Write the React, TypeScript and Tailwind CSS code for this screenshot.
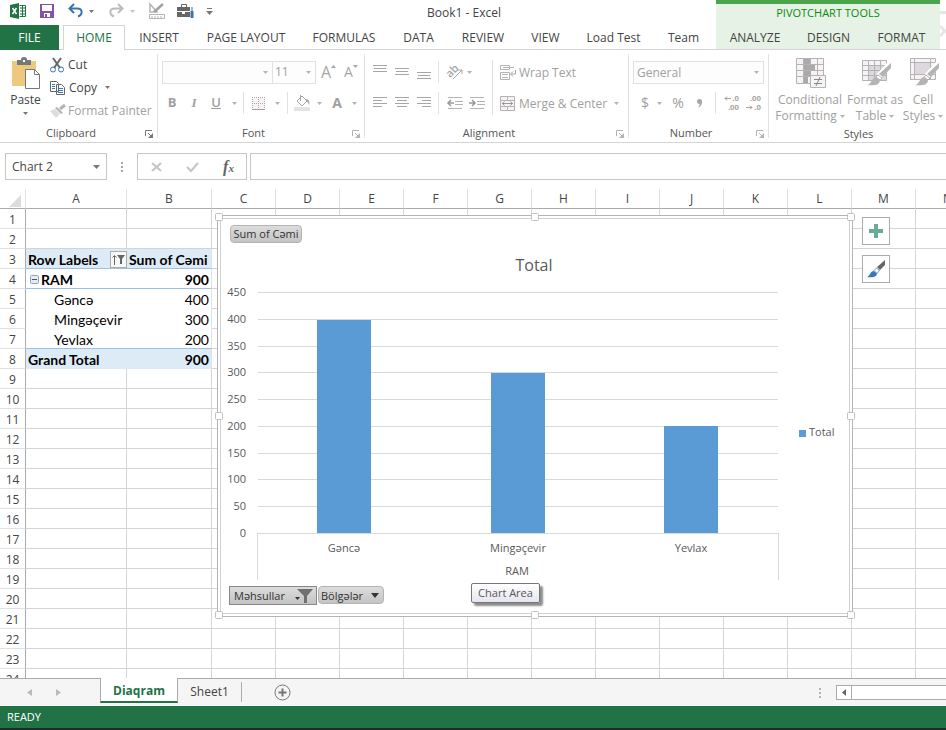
import { ReactNode } from 'react';

const TABS = [
  { label: 'INSERT', width: 'w-[67px]' },
  { label: 'PAGE LAYOUT', width: 'w-[107px]' },
  { label: 'FORMULAS', width: 'w-[89px]' },
  { label: 'DATA', width: 'w-[60px]' },
  { label: 'REVIEW', width: 'w-[69px]' },
  { label: 'VIEW', width: 'w-[56px]' },
  { label: 'Load Test', width: 'w-[80px]' },
  { label: 'Team', width: 'w-[60px]' },
];

const TOOL_TABS = [
  { label: 'ANALYZE', width: 'w-[78px]' },
  { label: 'DESIGN', width: 'w-[69px]' },
  { label: 'FORMAT', width: 'w-[77px]' },
];

const COLUMNS = ['A', 'B', 'C', 'D', 'E', 'F', 'G', 'H', 'I', 'J', 'K', 'L', 'M', 'N'];
const ROWS = Array.from({ length: 24 }, (_, i) => i + 1);

interface IconProps {
  w: number;
  h: number;
  children: ReactNode;
}

function Icon({ w, h, children }: IconProps) {
  return (
    <svg width={w} height={h} viewBox={`0 0 ${w} ${h}`} fill="none" className="shrink-0 overflow-visible" aria-hidden="true">
      {children}
    </svg>
  );
}

function Caret({ color = '#b4b4b4' }: { color?: string }) {
  return (
    <Icon w={5} h={3}>
      <path d="M0 0h5L2.500 3z" fill={color} />
    </Icon>
  );
}

function Launcher({ color = '#b4b4b4' }: { color?: string }) {
  return (
    <Icon w={8} h={8}>
      <path d="M.5 6V.5H7M3 3l3 3" stroke={color} />
      <path d="M8 3v5H3z" fill={color} />
    </Icon>
  );
}

function Divider() {
  return <span className="h-[22px] w-px shrink-0 bg-[#e1e1e1]" />;
}

interface IconButtonProps {
  label: string;
  width: string;
  children: ReactNode;
}

function IconButton({ label, width, children }: IconButtonProps) {
  return (
    <button aria-label={label} className={`flex h-[22px] shrink-0 items-center justify-center ${width}`}>
      {children}
    </button>
  );
}

interface GroupProps {
  name: string;
  width: string;
  launcher?: ReactNode;
  children: ReactNode;
}

function Group({ name, width, launcher, children }: GroupProps) {
  return (
    <section className={`my-1 flex shrink-0 flex-col border-r border-[#e1e1e1] ${width}`}>
      <div className="h-[75px] shrink-0">{children}</div>
      <div className="flex h-[9px] items-center pr-1">
        <h2 className="flex-1 pr-1 pl-px text-center text-[11px] text-[#555]">{name}</h2>
        {launcher}
      </div>
    </section>
  );
}

function Lines({ rows }: { rows: [number, number, number][] }) {
  return (
    <Icon w={14} h={14}>
      {rows.map(([x, y, len]) => (
        <path key={y} d={`M${x} ${y}.5h${len}`} stroke="#a6a6a6" />
      ))}
    </Icon>
  );
}

function QuickAccess() {
  return (
    <div className="flex h-[22px] w-[212px] items-center pl-[10px]">
      <Icon w={16} h={16}>
        <path d="M0 2l9-2v16l-9-2z" fill="#217346" />
        <path d="M9.5 2.5h6v11h-6M10 5h5M10 8h5M10 11h5M12.5 3v10" stroke="#217346" />
        <path d="M2.500 5l4 6M6.500 5l-4 6" stroke="#fff" strokeWidth="1.500" />
      </Icon>
      <button aria-label="Save" className="ml-[14px]">
        <Icon w={14} h={14}>
          <path d="M0 0h14v14H0z" fill="#8452a8" />
          <path d="M2 1h10v6H2zM4 9h6v4H4z" fill="#fff" />
          <path d="M5 10h2v3H5z" fill="#8452a8" />
        </Icon>
      </button>
      <button aria-label="Undo" className="ml-[14px] flex items-center gap-[6px]">
        <Icon w={15} h={14}>
          <path d="M6 0L1.500 4.500L6 9M2 4.500h7c6 0 6 6 1 8" stroke="#3b73af" strokeWidth="2" />
        </Icon>
        <Caret color="#777" />
      </button>
      <button aria-label="Redo" className="ml-[15px] flex items-center gap-[6px]">
        <Icon w={15} h={14}>
          <path d="M9 0l4.500 4.500L9 9M13 4.500H6c-6 0-6 6-1 8" stroke="#bcbcbc" strokeWidth="2" />
        </Icon>
        <Caret color="#c4c4c4" />
      </button>
      <button aria-label="Design mode" className="ml-[14px]">
        <Icon w={16} h={16}>
          <path d="M1 1v8h7z" stroke="#b4b4b4" strokeWidth="1.500" />
          <path d="M14 1L5 9" stroke="#a0a0a0" strokeWidth="2.500" />
          <path d="M.5 11.500h15v4H.5zM3 13v2M6 13v2M9 13v2M12 13v2" stroke="#b4b4b4" />
        </Icon>
      </button>
      <button aria-label="Toolbox" className="ml-3">
        <Icon w={17} h={14}>
          <path d="M4.500 3V.5h5V3" stroke="#666" />
          <path d="M0 3h13v4H0zM0 8h5v2h3V8h5v5H0z" fill="#666" />
          <path d="M15 3v4" stroke="#3b73af" />
          <path d="M13.500 7h3v7h-3z" fill="#3b73af" />
        </Icon>
      </button>
      <button aria-label="Customize" className="ml-3">
        <Icon w={7} h={7}>
          <path d="M1 .5h5" stroke="#777" />
          <path d="M0 3h7L3.500 7z" fill="#777" />
        </Icon>
      </button>
    </div>
  );
}

function Header() {
  return (
    <header className="flex h-[50px] shrink-0">
      <div className="flex w-[716px] shrink-0 flex-col">
        <div className="flex h-[25px]">
          <QuickAccess />
          <h1 className="flex-1 text-center text-xs leading-[26px] text-[#444]">Book1 - Excel</h1>
        </div>
        <nav className="flex h-[25px] text-xs text-[#444]">
          <button className="w-[59px] bg-[#217346] text-white">FILE</button>
          <span className="w-1 border-b border-[#d4d4d4]" />
          <button className="w-[62px] border border-b-0 border-[#d4d4d4] text-[#217346]">HOME</button>
          {TABS.map((tab) => (
            <button key={tab.label} className={`shrink-0 whitespace-nowrap border-b border-[#d4d4d4] pl-px pt-[2px] ${tab.width}`}>
              {tab.label}
            </button>
          ))}
          <span className="flex-1 border-b border-[#d4d4d4]" />
        </nav>
      </div>
      <div className="flex w-[224px] shrink-0 flex-col border-t-4 border-[#4ba54b] bg-[#e6f2e6]">
        <p className="h-[21px] text-center text-[11px] leading-[18px] text-[#0a8a0a]">PIVOTCHART TOOLS</p>
        <nav className="flex h-[25px] text-xs text-[#444]">
          {TOOL_TABS.map((tab) => (
            <button key={tab.label} className={`border-b border-[#d4d4d4] pt-[2px] ${tab.width}`}>
              {tab.label}
            </button>
          ))}
        </nav>
      </div>
      <div className="flex-1 overflow-hidden border-b border-[#d4d4d4]">
        <Icon w={6} h={40}>
          <path d="M0 12.500h6M0 26l5 5-5 5" stroke="#e6e6e6" strokeWidth="3" />
        </Icon>
      </div>
    </header>
  );
}

function ClipboardGroup() {
  return (
    <Group name="Clipboard" width="w-[158px]" launcher={<Launcher color="#777" />}>
      <div className="flex">
        <button className="flex w-[50px] flex-col items-center pl-px pt-1 text-xs text-[#444]">
          <Icon w={29} h={31}>
            <path d="M1 3h24v25H1z" fill="#edc87e" />
            <path d="M6 2h4a3 3 0 016 0h4v5H6z" fill="#777" />
            <path d="M12 2h2v2h-2z" fill="#fff" />
            <path d="M14.500 11.500h9l5 5v14h-14z" fill="#fff" stroke="#777" />
            <path d="M23.500 11.500v5h5" stroke="#777" />
          </Icon>
          <span className="pt-px leading-[20px]">Paste</span>
          <span className="mt-[2px]">
            <Caret color="#777" />
          </span>
        </button>
        <div className="flex flex-col text-xs text-[#444]">
          <button className="flex h-[22px] items-center gap-1">
            <Icon w={14} h={15}>
              <path d="M3 0l7 10M11 0L4 10" stroke="#666" strokeWidth="2" />
              <circle cx="3" cy="11.500" r="2.500" stroke="#3b73af" />
              <circle cx="11" cy="11.500" r="2.500" stroke="#3b73af" />
            </Icon>
            Cut
          </button>
          <button className="flex h-[23px] items-center gap-1">
            <Icon w={15} h={14}>
              <path d="M.5.5h6l2 2v8h-8zM6.500 3.500h5l3 3v7h-8z" fill="#fff" stroke="#666" />
              <path d="M2 3.500h3M2 5.500h3M2 7.500h3M8 7.500h5M8 9.500h5M8 11.500h5" stroke="#3b73af" />
            </Icon>
            Copy
            <span className="ml-1">
              <Caret color="#777" />
            </span>
          </button>
          <button className="flex h-[23px] items-center gap-[2px] whitespace-nowrap text-[#a0a0a0]">
            <Icon w={16} h={14}>
              <path d="M0 7l5-2 5 5-4 4z" fill="#ddd" />
              <path d="M5 4l2-1 6 6-2 1z" fill="#b4b4b4" />
              <path d="M10 5l5-4" stroke="#b4b4b4" strokeWidth="3" />
            </Icon>
            Format Painter
          </button>
        </div>
      </div>
    </Group>
  );
}

function FontGroup() {
  return (
    <Group name="Font" width="w-[207px]" launcher={<Launcher />}>
      <div className="flex h-[36px] items-center pl-1">
        <label className="flex h-[23px] w-[111px] items-center border border-[#e1e1e1] bg-[#fdfdfd] pr-1">
          <input aria-label="Font name" className="min-w-0 flex-1 outline-none" />
          <Caret />
        </label>
        <label className="flex h-[23px] w-[43px] items-center border border-l-0 border-[#e1e1e1] bg-[#fdfdfd] pr-1">
          <input aria-label="Font size" defaultValue="11" className="w-0 flex-1 pl-[2px] text-xs text-[#a0a0a0] outline-none" />
          <Caret />
        </label>
        <IconButton label="Increase font size" width="w-[25px]">
          <span className="text-base leading-none text-[#a6a6a6]">A</span>
          <span className="mb-3">
            <Icon w={5} h={3}>
              <path d="M0 3h5L2.500 0z" fill="#a6a6a6" />
            </Icon>
          </span>
        </IconButton>
        <IconButton label="Decrease font size" width="w-[20px]">
          <span className="text-sm leading-none text-[#a6a6a6]">A</span>
          <span className="mb-3">
            <Caret color="#a6a6a6" />
          </span>
        </IconButton>
      </div>
      <div className="flex h-[26px] items-center pl-[3px] text-[13px] text-[#a0a0a0]">
        <IconButton label="Bold" width="w-[22px]">
          <b>B</b>
        </IconButton>
        <IconButton label="Italic" width="w-[22px]">
          <i className="font-['Liberation_Serif',serif] font-bold">I</i>
        </IconButton>
        <IconButton label="Underline" width="w-[22px]">
          <span className="font-semibold underline">U</span>
        </IconButton>
        <IconButton label="Underline style" width="w-[15px]">
          <Caret />
        </IconButton>
        <span className="w-px" />
        <Divider />
        <IconButton label="Borders" width="w-[29px]">
          <Icon w={13} h={13}>
            <path d="M.5 .5h12v12H.5z" fill="#f6f2f6" />
            <path d="M.5 0v12M6.500 0v12M12.500 0v12M0 .5h13M0 6.500h13" stroke="#a6a6a6" strokeDasharray="1 1" />
            <path d="M0 12.500h13" stroke="#a0a0a0" />
          </Icon>
        </IconButton>
        <IconButton label="Border style" width="w-[8px]">
          <Caret />
        </IconButton>
        <span className="w-[6px]" />
        <Divider />
        <IconButton label="Fill color" width="w-[29px]">
          <Icon w={17} h={16}>
            <path d="M3 6l5-5 5 5-5 5zM6.500 0v6" stroke="#a6a6a6" />
            <path d="M12 4c3 0 4 3 3 6-1-3-2-4-3-4z" fill="#a6a6a6" />
            <path d="M0 12h16v4H0z" fill="#e5e1e5" />
          </Icon>
        </IconButton>
        <Caret />
        <IconButton label="Font color" width="w-[30px]">
          <b className="text-sm">A</b>
        </IconButton>
        <Caret />
      </div>
    </Group>
  );
}

function Indent({ flip = false }: { flip?: boolean }) {
  return (
    <Icon w={16} h={12}>
      <path d="M1 .5h14M8 4.500h8M8 7.500h8M1 11.500h14" stroke="#b4b4b4" />
      <path d={flip ? 'M0 6h5M3 3l3 3-3 3' : 'M7 6H1M4 3L1 6l3 3'} stroke="#999" strokeWidth="1.500" />
    </Icon>
  );
}

function AlignmentGroup() {
  return (
    <Group name="Alignment" width="w-[264px]" launcher={<Launcher />}>
      <div className="flex pl-1 text-xs text-[#a0a0a0]">
        <div className="flex w-[70px] flex-col">
          <div className="flex h-[36px] items-center">
            <IconButton label="Top align" width="w-[22px]">
              <Lines rows={[[0, 0, 14], [1, 3, 12], [0, 6, 14]]} />
            </IconButton>
            <IconButton label="Middle align" width="w-[22px]">
              <Lines rows={[[0, 3, 14], [1, 6, 12], [0, 9, 14]]} />
            </IconButton>
            <IconButton label="Bottom align" width="w-[22px]">
              <Lines rows={[[0, 7, 14], [1, 10, 12], [0, 13, 14]]} />
            </IconButton>
            <span className="flex-1" />
            <Divider />
          </div>
          <div className="flex h-[26px] items-center">
            <IconButton label="Align left" width="w-[22px]">
              <Lines rows={[[0, 1, 14], [0, 4, 9], [0, 7, 14], [0, 10, 9]]} />
            </IconButton>
            <IconButton label="Center" width="w-[22px]">
              <Lines rows={[[0, 1, 14], [2, 4, 10], [0, 7, 14], [2, 10, 10]]} />
            </IconButton>
            <IconButton label="Align right" width="w-[22px]">
              <Lines rows={[[0, 1, 14], [5, 4, 9], [0, 7, 14], [5, 10, 9]]} />
            </IconButton>
            <span className="flex-1" />
            <Divider />
          </div>
        </div>
        <div className="flex w-[53px] flex-col">
          <button aria-label="Orientation" className="flex h-[36px] items-center gap-1 pl-2">
            <Icon w={16} h={16}>
              <text x="-1" y="11" fontSize="11" fontWeight="600" fill="#a6a6a6" transform="rotate(-45 5 8)">
                ab
              </text>
              <path d="M6 15L15 6M11 6h4v4" stroke="#a6a6a6" />
            </Icon>
            <Caret />
          </button>
          <div className="flex h-[26px] items-center pl-[5px]">
            <IconButton label="Decrease indent" width="w-[22px]">
              <Indent />
            </IconButton>
            <IconButton label="Increase indent" width="w-[22px]">
              <Indent flip />
            </IconButton>
          </div>
        </div>
        <span className="mt-[6px] h-[55px] w-px bg-[#e1e1e1]" />
        <div className="flex flex-col pl-[7px]">
          <button className="flex h-[36px] items-center gap-[3px] pt-px">
            <Icon w={16} h={15}>
              <path d="M.5.5h9v4h-9zM.5 7.500h9v7h-9zM3 2.500h11M2 9.500h6M2 12.500h6" stroke="#b4b4b4" />
              <path d="M15.500 5v4H11M13 6.500L10.500 9l2.500 2.500" stroke="#a6a6a6" />
            </Icon>
            Wrap Text
          </button>
          <button className="flex h-[26px] items-center gap-[3px] whitespace-nowrap pt-px">
            <Icon w={16} h={15}>
              <path d="M.5.5h14v14H.5zM.5 4.500h14M.5 10.500h14M7.500 0v4M7.500 11v4" fill="#f6f2f6" stroke="#b4b4b4" />
              <path d="M2 7.500h11M4.500 5.500l-2 2 2 2M10.500 5.500l2 2-2 2" stroke="#999" />
            </Icon>
            Merge &amp; Center
            <span className="ml-1">
              <Caret />
            </span>
          </button>
        </div>
      </div>
    </Group>
  );
}

function NumberGroup() {
  return (
    <Group name="Number" width="w-[140px]" launcher={<Launcher />}>
      <div className="flex h-[36px] items-center px-1">
        <button
          aria-label="Number format"
          className="flex h-[23px] w-full items-center justify-between border border-[#e1e1e1] bg-[#fdfdfd] pl-[3px] pr-1 pt-px text-xs text-[#a0a0a0]"
        >
          General
          <Caret />
        </button>
      </div>
      <div className="flex h-[26px] items-center pl-1 text-sm text-[#a0a0a0]">
        <IconButton label="Accounting format" width="w-[24px]">
          $
        </IconButton>
        <Caret />
        <IconButton label="Percent style" width="w-[32px]">
          %
        </IconButton>
        <IconButton label="Comma style" width="w-[10px]">
          <Icon w={5} h={9}>
            <circle cx="2.500" cy="2.500" r="2.500" fill="#a6a6a6" />
            <path d="M5 2c0 4-1 5-4 7 2-3 2-4 1-6z" fill="#a6a6a6" />
          </Icon>
        </IconButton>
        <span className="w-[11px]" />
        <Divider />
        <button
          aria-label="Increase decimal"
          className="ml-[7px] flex w-[16px] flex-col items-end font-['Liberation_Sans',sans-serif] text-[8px] leading-[9px] font-bold"
        >
          <span className="flex items-center gap-px">
            <Icon w={7} h={5}>
              <path d="M7 2.500H1M3 .5l-2 2 2 2" stroke="#a0a0a0" />
            </Icon>
            .0
          </span>
          <span>.00</span>
        </button>
        <button
          aria-label="Decrease decimal"
          className="ml-[6px] flex w-[16px] flex-col items-end font-['Liberation_Sans',sans-serif] text-[8px] leading-[9px] font-bold"
        >
          <span>.00</span>
          <span className="flex items-center gap-px">
            <Icon w={7} h={5}>
              <path d="M0 2.500h6M4 .5l2 2-2 2" stroke="#a0a0a0" />
            </Icon>
            .0
          </span>
        </button>
      </div>
    </Group>
  );
}

function Brush() {
  return (
    <>
      <path d="M31 6L19 19" stroke="#fff" strokeWidth="6" />
      <path d="M31 6v5l-8 9-4-3z" fill="#b4b4b4" />
      <path d="M7 28c5-1 4-7 9-8l4 3c0 5-6 6-13 5z" fill="#b4b4b4" />
      <path d="M16 20l2-2 4 3-2 2z" fill="#fff" stroke="#b4b4b4" />
    </>
  );
}

function StylesGroup() {
  return (
    <section className="my-1 flex w-[178px] shrink-0 flex-col pl-px text-xs leading-[16px] text-[#a0a0a0]">
      <div className="flex h-[75px] shrink-0">
        <button className="flex w-[80px] flex-col items-center pt-[3px]">
          <Icon w={31} h={32}>
            <path d="M1.500 1.500h27v25h-27zM1 7.500h27M1 13.500h27M1 19.500h27M8.500 1v25M15.500 1v25M22.500 1v25" fill="#f6f2f6" stroke="#b4b4b4" />
            <path d="M9 2h6v5H9zM9 8h11v5H9zM9 14h7v5H9zM9 20h4v6H9z" fill="#aaa" />
            <path d="M15.500 18.500h15v12h-15z" fill="#f6f2f6" stroke="#b4b4b4" />
            <path d="M19 22.500h8M19 26.500h8M25 20l-4 9" stroke="#888" />
          </Icon>
          <span className="mt-[3px] whitespace-nowrap">Conditional</span>
          <span className="flex items-center gap-[3px]">
            Formatting
            <Caret />
          </span>
        </button>
        <button className="flex w-[50px] flex-col items-center pt-[3px]">
          <Icon w={31} h={32}>
            <path d="M2.500 3.500h24v20h-24z" fill="#f6f2f6" />
            <path d="M9 9h17v14H9z" fill="#ddd8dd" />
            <path d="M2.500 3.500h24v20h-24zM2 8.500h24M2 13.500h24M2 18.500h24M8.500 3v20M14.500 3v20M20.500 3v20" stroke="#b4b4b4" />
            <Brush />
          </Icon>
          <span className="mt-[3px] whitespace-nowrap">Format as</span>
          <span className="flex items-center gap-[3px]">
            Table
            <Caret />
          </span>
        </button>
        <button className="flex w-[46px] flex-col items-center pt-[3px]">
          <Icon w={31} h={32}>
            <path d="M2.500 1.500h25v21h-25z" fill="#f6f2f6" />
            <path d="M7 6h15v11H7z" fill="#ddd8dd" />
            <path d="M2.500 1.500h25v21h-25zM2 5.500h25M2 17.500h25M6.500 1v21M22.500 1v21" stroke="#b4b4b4" />
            <Brush />
          </Icon>
          <span className="mt-[3px]">Cell</span>
          <span className="flex items-center gap-[3px]">
            Styles
            <Caret />
          </span>
        </button>
      </div>
      <h2 className="text-center text-[11px] leading-[9px] text-[#555]">Styles</h2>
    </section>
  );
}

function FormulaBar() {
  return (
    <div className="flex h-[46px] shrink-0 items-start pl-[5px] pt-[10px]">
      <label className="flex h-[27px] w-[102px] items-center border border-[#c6c6c6] pl-[6px] pr-[6px]">
        <input aria-label="Name box" defaultValue="Chart 2" className="w-0 flex-1 text-xs text-[#444] outline-none" />
        <Icon w={7} h={4}>
          <path d="M0 0h7L3.500 4z" fill="#777" />
        </Icon>
      </label>
      <span className="flex h-[27px] w-[30px] items-center justify-center">
        <Icon w={2} h={10}>
          <path d="M0 0h2v2H0zM0 4h2v2H0zM0 8h2v2H0z" fill="#a6a6a6" />
        </Icon>
      </span>
      <div className="flex h-[27px] w-[110px] items-center border border-[#c6c6c6]">
        <IconButton label="Cancel" width="w-[36px]">
          <Icon w={11} h={10}>
            <path d="M1 1l9 8M10 1L1 9" stroke="#c4c4c4" strokeWidth="2" />
          </Icon>
        </IconButton>
        <IconButton label="Enter" width="w-[37px]">
          <Icon w={13} h={10}>
            <path d="M1 5l4 4 7-8" stroke="#c4c4c4" strokeWidth="2" />
          </Icon>
        </IconButton>
        <IconButton label="Insert function" width="w-[35px]">
          <i className="font-['Liberation_Serif',serif] text-base leading-none font-bold text-[#666]">
            f<span className="text-[11px]">x</span>
          </i>
        </IconButton>
      </div>
      <input aria-label="Formula" className="ml-[3px] h-[27px] min-w-0 flex-1 border border-r-0 border-[#c6c6c6] px-2 text-xs outline-none" />
    </div>
  );
}

const PIVOT: Record<number, { label: string; value: string; style: string }> = {
  3: { label: 'Row Labels', value: 'Sum of Cəmi', style: 'bg-[#ddebf7] border-b-[#9bc2e6] font-bold' },
  4: { label: 'RAM', value: '900', style: 'border-b-[#9bc2e6] font-bold' },
  5: { label: 'Gəncə', value: '400', style: 'border-b-white' },
  6: { label: 'Mingəçevir', value: '300', style: 'border-b-white' },
  7: { label: 'Yevlax', value: '200', style: 'border-b-[#9bc2e6]' },
  8: { label: 'Grand Total', value: '900', style: 'bg-[#ddebf7] border-b-[#ddebf7] font-bold' },
};

function LabelCell({ row }: { row: number }) {
  const entry = PIVOT[row];
  if (row === 3) {
    return (
      <span className="flex items-center justify-between pl-[2px]">
        {entry.label}
        <button aria-label="Filter row labels" className="flex h-[17px] w-[17px] items-center justify-center border border-[#ababab] bg-[#f8f8f8]">
          <Icon w={13} h={11}>
            <path d="M2.500 11V2M.5 3.500l2-2 2 2" stroke="#666" />
            <path d="M5 1h8L10 5v5H8V5z" fill="#666" />
          </Icon>
        </button>
      </span>
    );
  }
  if (row === 4) {
    return (
      <span className="flex items-center gap-[2px] pl-1">
        <button aria-label="Collapse RAM">
          <Icon w={9} h={9}>
            <rect x=".5" y=".5" width="8" height="8" rx="1" fill="#e4ebf5" stroke="#8fa3c0" />
            <path d="M2 4.500h5" stroke="#44546a" />
          </Icon>
        </button>
        {entry.label}
      </span>
    );
  }
  return <span className={row === 8 ? 'pl-[2px]' : 'pl-7'}>{entry.label}</span>;
}

function Grid() {
  return (
    <table className="w-[980px] table-fixed border-separate border-spacing-0 text-[#444]">
      <colgroup>
        <col className="w-[26px]" />
        <col className="w-[101px]" />
        <col className="w-[85px]" />
        {COLUMNS.slice(2).map((c) => (
          <col key={c} className="w-[64px]" />
        ))}
      </colgroup>
      <thead>
        <tr className="h-[20px] text-xs leading-[19px]">
          <th className="border-b border-r border-b-[#ababab] border-r-[#e1e1e1] p-0">
            <span className="flex justify-end pr-1 pt-1">
              <Icon w={12} h={12}>
                <path d="M12 0v12H0z" fill="#dcdcdc" />
              </Icon>
            </span>
          </th>
          {COLUMNS.map((c) => (
            <th key={c} scope="col" className="border-b border-r border-b-[#ababab] border-r-[#e1e1e1] p-0 font-normal">
              {c}
            </th>
          ))}
        </tr>
      </thead>
      <tbody>
        {ROWS.map((r) => (
          <tr key={r} className="h-[20px]">
            <th scope="row" className="border-b border-r border-b-[#e1e1e1] border-r-[#ababab] p-0 pt-[2px] text-xs leading-[17px] font-normal">
              {r}
            </th>
            {COLUMNS.map((c) => {
              const entry = PIVOT[r];
              if (entry && c === 'A') {
                return (
                  <td key={c} className={`whitespace-nowrap border-b p-0 pt-[2px] font-['Lato','Open_Sans',sans-serif] text-sm leading-[17px] text-black ${entry.style}`}>
                    <LabelCell row={r} />
                  </td>
                );
              }
              if (entry && c === 'B') {
                return (
                  <td key={c} className={`whitespace-nowrap border-b border-r border-r-[#e1e1e1] p-0 pt-[2px] font-['Lato','Open_Sans',sans-serif] text-sm leading-[17px] text-black ${r === 3 ? 'pl-[2px] text-left' : 'pr-[2px] text-right'} ${entry.style}`}>
                    {entry.value}
                  </td>
                );
              }
              return <td key={c} className="border-b border-r border-[#d4d4d4] p-0" />;
            })}
          </tr>
        ))}
      </tbody>
    </table>
  );
}

const TICKS = [450, 400, 350, 300, 250, 200, 150, 100, 50, 0];
const SERIES = [
  { city: 'Gəncə', total: 400 },
  { city: 'Mingəçevir', total: 300 },
  { city: 'Yevlax', total: 200 },
];
const BASE = 318;
const scaleY = (v: number) => Math.round(BASE - (v * 241) / 450);
const barTop = (v: number) => Math.round(BASE - (v * 240) / 450);

function Handles() {
  return (
    <>
      {[1, 317, 633].map((x) =>
        [1, 200, 399].map((y) =>
          x === 317 && y === 200 ? null : (
            <rect key={`${x}-${y}`} x={x - 2.5} y={y - 2.5} width="7" height="7" rx="1" fill="#fff" stroke="#c0c0c0" />
          )
        )
      )}
    </>
  );
}

function PivotChart() {
  return (
    <div className="absolute left-[217px] top-[26px] h-[402px] w-[636px] bg-white">
      <svg viewBox="0 0 636 402" className="h-full w-full overflow-visible" role="img" aria-label="Total by city" fontSize="11" fill="#595959">
        <rect x=".5" y=".5" width="635" height="401" fill="#fff" stroke="#b4b4b4" />
        <rect x="3.500" y="3.500" width="629" height="395" fill="#fff" stroke="#d0d0d0" />
        <text x="317" y="56" fontSize="16" textAnchor="middle">
          Total
        </text>
        {TICKS.map((t) => (
          <g key={t}>
            <path d={`M41 ${scaleY(t)}.5h520`} stroke="#d9d9d9" />
            <text x="29" y={scaleY(t) + 4} textAnchor="end">
              {t}
            </text>
          </g>
        ))}
        <path d="M40.500 318v47M561.500 318v47" stroke="#d9d9d9" />
        {SERIES.map((s, i) => (
          <g key={s.city}>
            <rect x={100 + Math.round(i * 173.5)} y={barTop(s.total)} width="54" height={BASE - barTop(s.total)} fill="#5b9bd5" />
            <text x={127 + Math.round(i * 173.5)} y="337" textAnchor="middle">
              {s.city}
            </text>
          </g>
        ))}
        <text x="300" y="360" textAnchor="middle">
          RAM
        </text>
        <rect x="582" y="215" width="7" height="7" fill="#5b9bd5" />
        <text x="592" y="221">
          Total
        </text>
        <Handles />
      </svg>
      <button className="absolute left-[13px] top-[10px] h-[18px] w-[72px] whitespace-nowrap rounded-[4px] border border-[#b4b4b4] bg-linear-to-b from-[#dcdcdc] to-[#c4c4c4] text-[11px] leading-[16px] text-[#333]">
        Sum of Cəmi
      </button>
      <div className="absolute left-[12px] top-[371px] flex">
        <button className="flex h-[19px] w-[88px] items-center justify-between border border-[#888] bg-linear-to-b from-[#dcdcdc] to-[#c4c4c4] pl-1 pr-[3px] text-[11px] leading-[16px] text-[#333]">
          Məhsullar
          <Icon w={18} h={14}>
            <path d="M0 8h5l-2.500 3z" fill="#333" />
            <path d="M2 0h16l-6 7v7H9V7z" fill="#707070" />
          </Icon>
        </button>
        <button className="ml-px flex h-[18px] w-[66px] items-center justify-between rounded-[4px] border border-[#b4b4b4] bg-linear-to-b from-[#dcdcdc] to-[#c4c4c4] pl-[2px] pr-1 pt-px text-[11px] leading-[16px] text-[#333]">
          Bölgələr
          <Icon w={8} h={5}>
            <path d="M0 0h8L4 5z" fill="#333" />
          </Icon>
        </button>
      </div>
      <div
        role="tooltip"
        className="absolute left-[254px] top-[368px] h-[20px] w-[69px] whitespace-nowrap rounded-[2px] border border-[#767676] bg-linear-to-b from-white to-[#e4e5f0] text-center text-[11px] leading-[18px] text-[#575757] shadow-[3px_3px_2px_rgba(0,0,0,0.45)]"
      >
        Chart Area
      </div>
    </div>
  );
}

function ChartTools() {
  return (
    <div className="absolute left-[862px] top-[28px] flex flex-col gap-[10px]">
      <button aria-label="Chart elements" className="flex h-[28px] w-[28px] items-center justify-center border border-[#ababab] bg-white">
        <Icon w={14} h={14}>
          <path d="M7 0v14M0 7h14" stroke="#6aab93" strokeWidth="4" />
        </Icon>
      </button>
      <button aria-label="Chart styles" className="flex h-[28px] w-[28px] items-center justify-center border border-[#ababab] bg-white">
        <Icon w={18} h={18}>
          <path d="M18 0v5l-5 5-3-3z" fill="#666" />
          <path d="M0 17c4-2 3-6 7-6l3 2c0 4-4 5-10 4z" fill="#3b78b8" />
          <path d="M7 10.500L9.500 8l3 2.500-2.500 3z" fill="#fff" stroke="#5f97cc" />
        </Icon>
      </button>
    </div>
  );
}

function SheetTabs() {
  return (
    <div className="flex h-[28px] shrink-0 bg-[#f5f5f5] text-xs text-[#444]">
      <div className="flex w-[100px] items-center border-t border-[#ababab] pl-[27px]">
        <button aria-label="Previous sheet">
          <Icon w={5} h={7}>
            <path d="M5 0v7L0 3.500z" fill="#bbb" />
          </Icon>
        </button>
        <button aria-label="Next sheet" className="ml-6">
          <Icon w={5} h={7}>
            <path d="M0 0v7l5-3.500z" fill="#bbb" />
          </Icon>
        </button>
      </div>
      <button className="h-[25px] w-[78px] border-x border-b-2 border-x-[#ababab] border-b-[#217346] bg-white pt-[3px] font-bold text-[#217346]">
        Diaqram
      </button>
      <div className="flex flex-1 border-t border-[#ababab]">
        <button className="mt-[3px] mb-1 w-[64px] border-r border-[#ababab]">Sheet1</button>
        <button aria-label="New sheet" className="ml-[32px]">
          <Icon w={17} h={17}>
            <circle cx="8.500" cy="8.500" r="7.500" stroke="#777" />
            <path d="M8.500 4.500v8M4.500 8.500h8" stroke="#777" strokeWidth="2" />
          </Icon>
        </button>
        <span className="flex-1" />
        <span className="flex items-center">
          <Icon w={2} h={10}>
            <path d="M0 0h2v2H0zM0 4h2v2H0zM0 8h2v2H0z" fill="#b4b4b4" />
          </Icon>
        </span>
        <div className="ml-[15px] mt-[6px] flex h-[15px] w-[110px] border border-r-0 border-[#ababab] bg-white">
          <button aria-label="Scroll left" className="flex w-[15px] items-center justify-center border-r border-[#ababab]">
            <Icon w={4} h={7}>
              <path d="M4 0v7L0 3.500z" fill="#666" />
            </Icon>
          </button>
        </div>
      </div>
    </div>
  );
}

export default function App() {
  return (
    <div className="flex h-screen flex-col overflow-hidden bg-white font-['Open_Sans','Noto_Sans',sans-serif]">
      <Header />
      <div className="flex h-[93px] shrink-0 overflow-hidden border-b border-[#d4d4d4]">
        <ClipboardGroup />
        <FontGroup />
        <AlignmentGroup />
        <NumberGroup />
        <StylesGroup />
      </div>
      <FormulaBar />
      <main className="relative min-h-0 flex-1 overflow-hidden">
        <Grid />
        <PivotChart />
        <ChartTools />
      </main>
      <SheetTabs />
      <footer className="h-[24px] shrink-0 border-b-2 border-[#1c2b2b] bg-[#217346] pl-[7px] text-[11px] leading-[22px] text-white">READY</footer>
    </div>
  );
}
